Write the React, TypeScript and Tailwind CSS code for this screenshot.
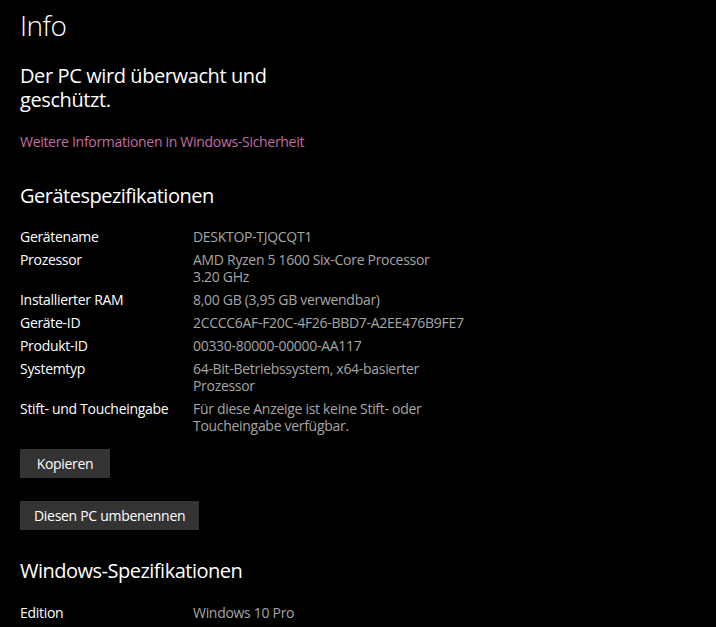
import React from "react";

const rows: { label: string; value: string[] }[] = [
  { label: "Gerätename", value: ["DESKTOP-TJQCQT1"] },
  { label: "Prozessor", value: ["AMD Ryzen 5 1600 Six-Core Processor", "3.20 GHz"] },
  { label: "Installierter RAM", value: ["8,00 GB (3,95 GB verwendbar)"] },
  { label: "Geräte-ID", value: ["2CCCC6AF-F20C-4F26-BBD7-A2EE476B9FE7"] },
  { label: "Produkt-ID", value: ["00330-80000-00000-AA117"] },
  { label: "Systemtyp", value: ["64-Bit-Betriebssystem, x64-basierter", "Prozessor"] },
  { label: "Stift- und Toucheingabe", value: ["Für diese Anzeige ist keine Stift- oder", "Toucheingabe verfügbar."] },
];

function Row({ label, value }: { label: string; value: string[] }) {
  return (
    <div className="flex text-[14px] leading-[17px] tracking-[-0.3px]">
      <div className="w-[173px] shrink-0 text-white">{label}</div>
      <div className="flex flex-col text-[#a6a6a6] whitespace-nowrap">
        {value.map((v) => (
          <span key={v}>{v}</span>
        ))}
      </div>
    </div>
  );
}

export default function App() {
  return (
    <div
      className="w-[716px] h-[627px] overflow-hidden bg-black text-white pl-[20px] pt-[5px]"
      style={{ fontFamily: '"Open Sans", "Noto Sans", sans-serif' }}
    >
      <h1 className="text-[28px] leading-[40px] font-light tracking-[-0.5px]">Info</h1>
      <p className="mt-[19px] text-[20px] leading-[24px] w-[280px] tracking-[-0.4px]">
        Der PC wird überwacht und
        <br />
        geschützt.
      </p>
      <a className="block mt-[20px] text-[14px] leading-[20px] tracking-[-0.3px] text-[#c06fa2]">
        Weitere Informationen in Windows-Sicherheit
      </a>
      <h2 className="mt-[30px] text-[20px] leading-[28px] tracking-[-0.5px]">Gerätespezifikationen</h2>
      <div className="mt-[18px] flex flex-col gap-[6px]">
        {rows.map((r) => (
          <Row key={r.label} label={r.label} value={r.value} />
        ))}
      </div>
      <div className="mt-[15px] flex flex-col items-start gap-[23px]">
        <button className="h-[29px] min-w-[90px] px-[14px] bg-[#333333] text-white text-[14px] leading-[20px] tracking-[-0.3px]">
          Kopieren
        </button>
        <button className="h-[29px] min-w-[90px] px-[14px] bg-[#333333] text-white text-[14px] leading-[20px] tracking-[-0.3px]">
          Diesen PC umbenennen
        </button>
      </div>
      <h2 className="mt-[27px] text-[20px] leading-[28px] tracking-[-0.5px]">Windows-Spezifikationen</h2>
      <div className="mt-[19px] flex flex-col gap-[6px]">
        <Row label="Edition" value={["Windows 10 Pro"]} />
      </div>
    </div>
  );
}
